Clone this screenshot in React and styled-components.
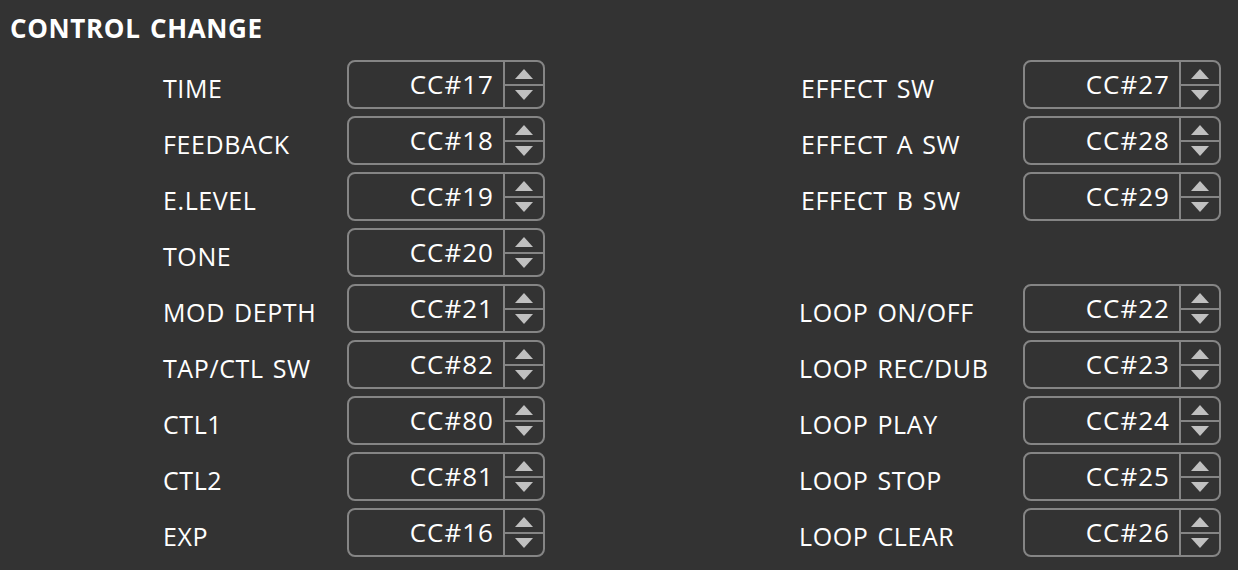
import React from "react";
import styled, { createGlobalStyle } from "styled-components";

const Global = createGlobalStyle`
  html, body { margin: 0; padding: 0; background: #333333; }
  body { font-family: "Open Sans", "DejaVu Sans", sans-serif; color: #ffffff; }
`;

const Page = styled.div`
  width: 1238px;
  height: 570px;
  background: #333333;
  overflow: hidden;
`;

const Title = styled.h1`
  margin: 0;
  padding: 11px 0 0 10px;
  font-size: 26px;
  font-weight: 700;
  line-height: 34px;
  letter-spacing: 0.65px;
  word-spacing: 2px;
`;

const Grid = styled.div`
  display: grid;
  grid-template-columns: 184px 198px 478px 198px;
  grid-auto-rows: 49px;
  row-gap: 7px;
  margin: 15px 0 0 163px;
`;

const Label = styled.div`
  display: flex;
  align-items: center;
  padding-top: 6px;
  padding-left: ${(p) => p.$indent || 0}px;
  font-size: 25px;
  letter-spacing: 0.6px;
  word-spacing: 2px;
  white-space: nowrap;
`;

const Spin = styled.div`
  display: flex;
  box-sizing: border-box;
  height: 49px;
  border: 2px solid #858585;
  border-radius: 8px;
`;

const Value = styled.div`
  flex: 1;
  display: flex;
  align-items: center;
  justify-content: flex-end;
  padding-right: 9px;
  padding-bottom: 2px;
  font-size: 26px;
  letter-spacing: 1px;
`;

const Buttons = styled.div`
  width: 38px;
  display: flex;
  flex-direction: column;
  border-left: 2px solid #858585;
`;

const Half = styled.div`
  flex: 1;
  display: flex;
  align-items: ${(p) => (p.$up ? "flex-end" : "flex-start")};
  justify-content: center;
  padding: ${(p) => (p.$up ? "0 0 5px 0" : "4px 0 0 0")};
  & + & { border-top: 2px solid #858585; }
`;

const Arrow = ({ up }) => (
  <svg width="18" height="10" viewBox="0 0 18 10">
    {up ? (
      <polygon points="9,0 18,10 0,10" fill="#c0c0c0" />
    ) : (
      <polygon points="0,0 18,0 9,10" fill="#c0c0c0" />
    )}
  </svg>
);

const SpinBox = ({ value }) => (
  <Spin>
    <Value>{value}</Value>
    <Buttons>
      <Half $up>
        <Arrow up />
      </Half>
      <Half>
        <Arrow />
      </Half>
    </Buttons>
  </Spin>
);

const rows = [
  ["TIME", "CC#17", "EFFECT SW", "CC#27", 256],
  ["FEEDBACK", "CC#18", "EFFECT A SW", "CC#28", 256],
  ["E.LEVEL", "CC#19", "EFFECT B SW", "CC#29", 256],
  ["TONE", "CC#20", null, null, 0],
  ["MOD DEPTH", "CC#21", "LOOP ON/OFF", "CC#22", 254],
  ["TAP/CTL SW", "CC#82", "LOOP REC/DUB", "CC#23", 254],
  ["CTL1", "CC#80", "LOOP PLAY", "CC#24", 254],
  ["CTL2", "CC#81", "LOOP STOP", "CC#25", 254],
  ["EXP", "CC#16", "LOOP CLEAR", "CC#26", 254],
];

export default function App() {
  return (
    <Page>
      <Global />
      <Title>CONTROL CHANGE</Title>
      <Grid>
        {rows.map(([l1, v1, l2, v2, ind]) => (
          <React.Fragment key={l1}>
            <Label>{l1}</Label>
            <SpinBox value={v1} />
            {l2 ? <Label $indent={ind}>{l2}</Label> : <div />}
            {v2 ? <SpinBox value={v2} /> : <div />}
          </React.Fragment>
        ))}
      </Grid>
    </Page>
  );
}
